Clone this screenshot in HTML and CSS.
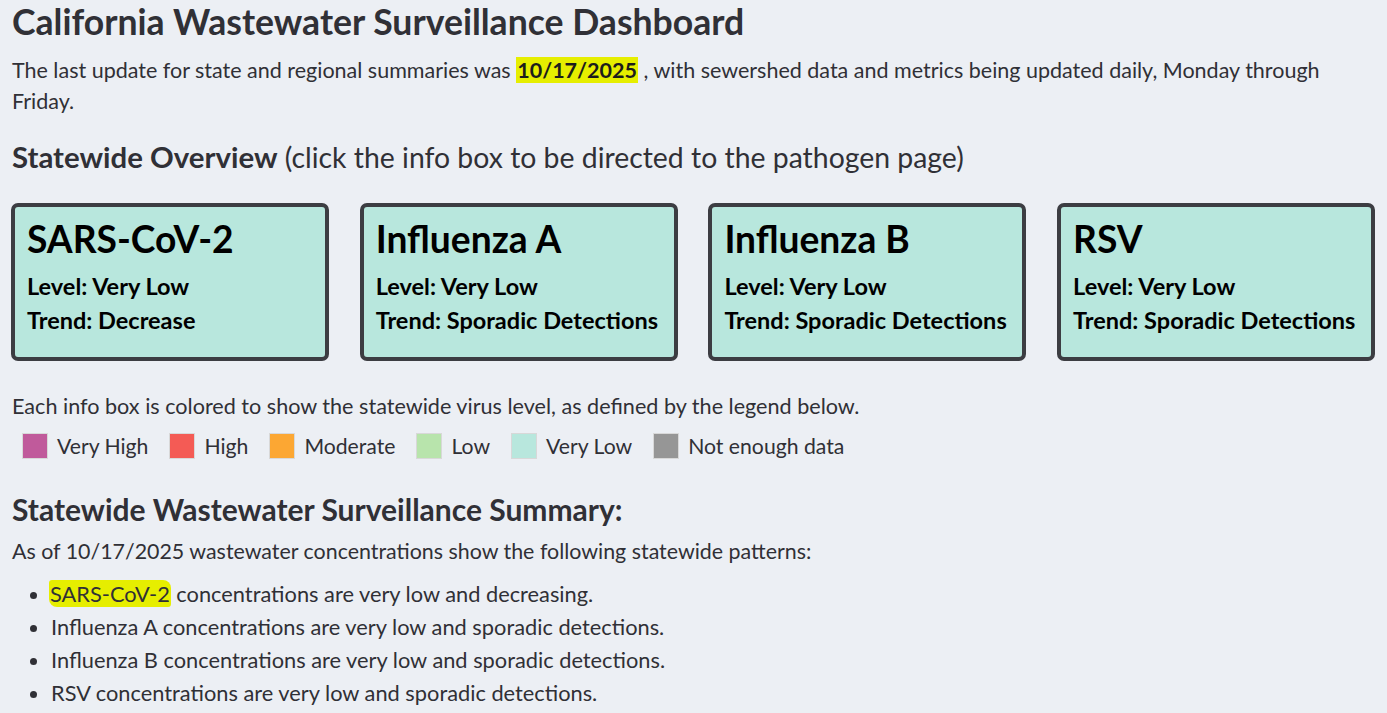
FILE: index.html
```html
<!DOCTYPE html>
<html>
<head>
<meta charset="utf-8">
<link rel="stylesheet" href="styles.css">
</head>
<body>
<main class="page">
  <h1 class="title">California Wastewater Surveillance Dashboard</h1>
  <p class="intro">The last update for state and regional summaries was <mark class="date">10/17/2025</mark> , with sewershed data and metrics being updated daily, Monday through Friday.</p>

  <h2 class="section"><strong>Statewide Overview</strong> <span class="note">(click the info box to be directed to the pathogen page)</span></h2>

  <div class="cards">
    <div class="card">
      <div class="card-title">SARS-CoV-2</div>
      <div class="card-line">Level: Very Low</div>
      <div class="card-line">Trend: Decrease</div>
    </div>
    <div class="card">
      <div class="card-title">Influenza A</div>
      <div class="card-line">Level: Very Low</div>
      <div class="card-line">Trend: Sporadic Detections</div>
    </div>
    <div class="card">
      <div class="card-title">Influenza B</div>
      <div class="card-line">Level: Very Low</div>
      <div class="card-line">Trend: Sporadic Detections</div>
    </div>
    <div class="card">
      <div class="card-title">RSV</div>
      <div class="card-line">Level: Very Low</div>
      <div class="card-line">Trend: Sporadic Detections</div>
    </div>
  </div>

  <p class="legend-intro">Each info box is colored to show the statewide virus level, as defined by the legend below.</p>
  <div class="legend">
    <span class="legend-item"><span class="swatch sw-vh"></span>Very High</span>
    <span class="legend-item"><span class="swatch sw-h"></span>High</span>
    <span class="legend-item"><span class="swatch sw-m"></span>Moderate</span>
    <span class="legend-item"><span class="swatch sw-l"></span>Low</span>
    <span class="legend-item"><span class="swatch sw-vl"></span>Very Low</span>
    <span class="legend-item"><span class="swatch sw-na"></span>Not enough data</span>
  </div>

  <h2 class="summary-title">Statewide Wastewater Surveillance Summary:</h2>
  <p class="summary-intro">As of 10/17/2025 wastewater concentrations show the following statewide patterns:</p>
  <ul class="summary-list">
    <li><mark class="hl">SARS-CoV-2</mark> concentrations are very low and decreasing.</li>
    <li>Influenza A concentrations are very low and sporadic detections.</li>
    <li>Influenza B concentrations are very low and sporadic detections.</li>
    <li>RSV concentrations are very low and sporadic detections.</li>
  </ul>
</main>
</body>
</html>
```

FILE: styles.css
```css
html, body {
  margin: 0;
  padding: 0;
  background: #eceff4;
}
body {
  font-family: "Lato", "Noto Sans", sans-serif;
  color: #303036;
}
.page {
  padding: 2px 12px 0 12px;
}
.title {
  font-size: 35.6px;
  font-weight: 700;
  line-height: 40px;
  margin: 0 0 13px 0;
  color: #303036;
}
.intro {
  font-size: 21.5px;
  line-height: 31px;
  margin: 0 0 22px 0;
}
.date {
  background: #e6ee00;
  color: #1c1c1c;
  font-weight: 700;
  padding: 0 1px;
}
.section {
  font-size: 28.4px;
  line-height: 36px;
  margin: 0 0 28px 0;
  font-weight: 400;
}
.section strong {
  font-weight: 700;
  font-size: 29.4px;
}
.cards {
  display: grid;
  grid-template-columns: repeat(4, 318px);
  column-gap: 30.7px;
  margin-left: -1px;
}
.card {
  height: 158px;
  box-sizing: border-box;
  border: 4px solid #3c3d42;
  border-radius: 7px;
  background: #b8e7dd;
  padding: 12px 12px;
  color: #000;
}
.card-title {
  font-size: 37.2px;
  font-weight: 700;
  line-height: 40px;
  margin-bottom: 10px;
}
.card-line {
  font-size: 23.5px;
  font-weight: 700;
  line-height: 34px;
  white-space: nowrap;
}
.legend-intro {
  font-size: 21.6px;
  line-height: 28px;
  margin: 31px 0 11px 0;
}
.legend {
  display: flex;
  align-items: center;
  gap: 21px;
  padding-left: 10px;
  font-size: 21.2px;
  line-height: 30px;
}
.legend-item {
  display: flex;
  align-items: center;
  gap: 9px;
}
.swatch {
  width: 26px;
  height: 26px;
  box-sizing: border-box;
  border: 1px solid #d8d8d8;
  display: inline-block;
}
.sw-vh { background: #c05a9b; }
.sw-h { background: #f45b55; }
.sw-m { background: #fca733; }
.sw-l { background: #b8e4ac; }
.sw-vl { background: #b8e7dd; }
.sw-na { background: #969696; }
.summary-title {
  font-size: 30px;
  font-weight: 700;
  line-height: 36px;
  margin: 30px 0 10px 0;
}
.summary-intro {
  font-size: 21.4px;
  line-height: 28px;
  margin: 0 0 12px 0;
}
.summary-list {
  margin: 0;
  padding-left: 39px;
  font-size: 21.8px;
  line-height: 33px;
}
.hl {
  background: #e6ee00;
  color: inherit;
  border-radius: 3px 8px 3px 8px;
  padding: 0 1px;
  margin-left: -2px;
}
```
